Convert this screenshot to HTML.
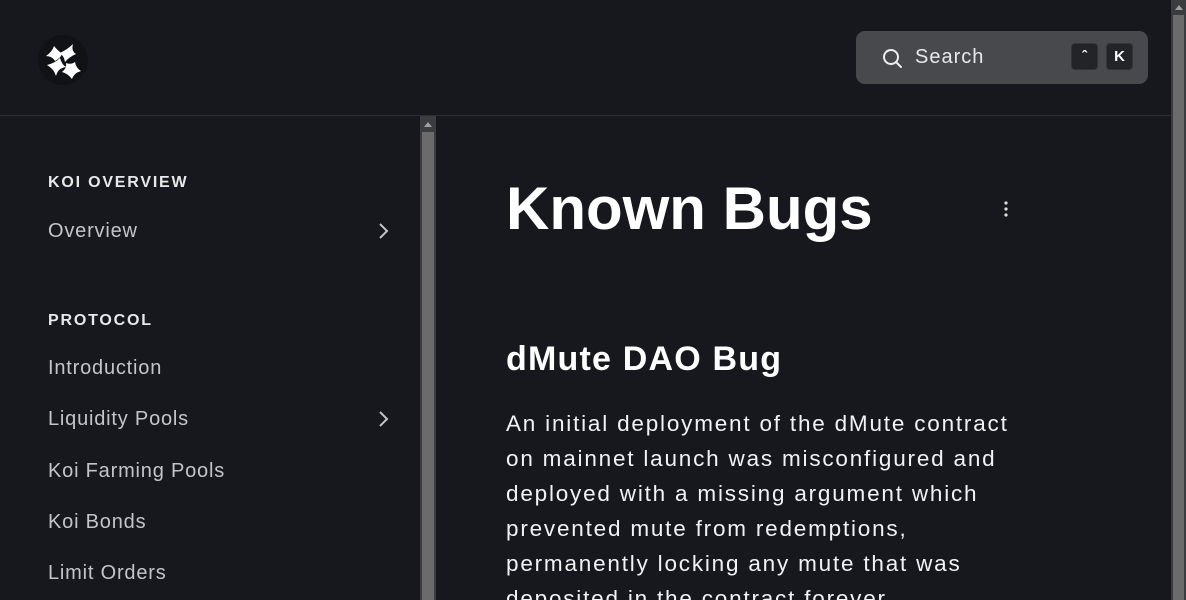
<!DOCTYPE html>
<html style="overflow:hidden;height:600px"><head><style>
*{margin:0;padding:0;box-sizing:border-box}
body{width:1186px;height:600px;overflow:hidden;background:#16181d;font-family:"Liberation Sans",sans-serif;color:#e6e6e8;position:relative}
.hdr{position:absolute;left:0;top:0;width:1171px;height:116px;border-bottom:1px solid #2c2e33}
.logo{position:absolute;left:38px;top:35px;width:50px;height:50px;border-radius:50%;background:#111215}
.search{position:absolute;left:856px;top:31px;width:292px;height:53px;background:#48494d;border-radius:9px}
.search .t{position:absolute;left:59px;top:15px;font-size:20px;color:#e8e8ea;letter-spacing:1px}
.kbd{position:absolute;top:12px;width:27px;height:27px;background:#222428;border:1px solid #333;border-radius:4px;color:#fff;font-size:15px;text-align:center;line-height:26px;font-weight:bold}
.sb{position:absolute;left:420px;top:116px;width:16px;height:484px;background:#3b3c3f}
.sb .th{position:absolute;left:2px;top:16px;width:12px;height:468px;background:#6b6b6b}
.rs{position:absolute;left:1171px;top:0;width:15px;height:600px;background:#3b3c3f}
.rs .th{position:absolute;left:2px;top:15px;width:11px;height:585px;background:#6b6b6b}
.arrow{position:absolute;width:0;height:0;border-left:4px solid transparent;border-right:4px solid transparent;border-bottom:5px solid #a0a0a0}
.sec{position:absolute;left:48px;font-size:16px;font-weight:bold;letter-spacing:1.8px;color:#e8e8ea}
.it{position:absolute;left:48px;font-size:20px;color:#c4c5c8;letter-spacing:0.8px}
.chev{position:absolute;left:376px}
h1{position:absolute;left:506px;top:174px;font-size:60px;font-weight:bold;color:#fff}
h2{position:absolute;left:506px;top:340px;font-size:34px;font-weight:bold;color:#fff;letter-spacing:1.2px}
p{position:absolute;left:506px;top:406px;width:620px;font-size:22.5px;line-height:35px;color:#f2f2f4;letter-spacing:1.8px;white-space:nowrap}
</style></head><body>
<div class="hdr">
<div class="logo"><svg width="50" height="50" viewBox="0 0 50 50"><g fill="#fff">
<path d="M16 11 Q22 18 24 18 Q24 22 17 26 Q14 21 8 21 Q14 17 16 11Z"/>
<path d="M35 9 Q33 16 38 19 Q31 22 27 27 Q26 21 22 18 Q30 14 35 9Z"/>
<path d="M9 30 Q17 28 22 23 Q24 30 28 32 Q20 33 18 41 Q16 34 9 30Z"/>
<path d="M37 27 Q38 33 43 36 Q36 38 34 44 Q29 38 24 37 Q29 33 28 28 Q33 30 37 27Z"/>
</g></svg></div>
<div class="search">
<svg style="position:absolute;left:26px;top:17px" width="21" height="21" viewBox="0 0 21 21"><circle cx="9" cy="9" r="7" fill="none" stroke="#eee" stroke-width="2"/><path d="M14 14L19 19" stroke="#eee" stroke-width="2" stroke-linecap="round"/></svg>
<div class="t">Search</div>
<div class="kbd" style="left:215px">ˆ</div>
<div class="kbd" style="left:250px">K</div>
</div>
</div>
<div class="sec" style="top:174px">KOI OVERVIEW</div>
<div class="it" style="top:220px">Overview</div>
<svg class="chev" style="top:221px" width="14" height="20" viewBox="0 0 14 20"><path d="M4 3L11 10L4 17" fill="none" stroke="#c4c5c8" stroke-width="2"/></svg>
<div class="sec" style="top:312px">PROTOCOL</div>
<div class="it" style="top:357px">Introduction</div>
<div class="it" style="top:408px">Liquidity Pools</div>
<svg class="chev" style="top:409px" width="14" height="20" viewBox="0 0 14 20"><path d="M4 3L11 10L4 17" fill="none" stroke="#c4c5c8" stroke-width="2"/></svg>
<div class="it" style="top:460px">Koi Farming Pools</div>
<div class="it" style="top:511px">Koi Bonds</div>
<div class="it" style="top:562px">Limit Orders</div>
<div class="sb"><div class="arrow" style="left:4px;top:6px"></div><div class="th"></div></div>
<div class="rs"><div class="arrow" style="left:4px;top:5px"></div><div class="th"></div></div>
<h1>Known Bugs</h1>
<svg style="position:absolute;left:1002px;top:200px" width="8" height="18"><circle cx="4" cy="3" r="1.6" fill="#ddd"/><circle cx="4" cy="9" r="1.6" fill="#ddd"/><circle cx="4" cy="15" r="1.6" fill="#ddd"/></svg>
<h2>dMute DAO Bug</h2>
<p>An initial deployment of the dMute contract<br>on mainnet launch was misconfigured and<br>deployed with a missing argument which<br>prevented mute from redemptions,<br>permanently locking any mute that was<br>deposited in the contract forever.</p>
</body></html>
